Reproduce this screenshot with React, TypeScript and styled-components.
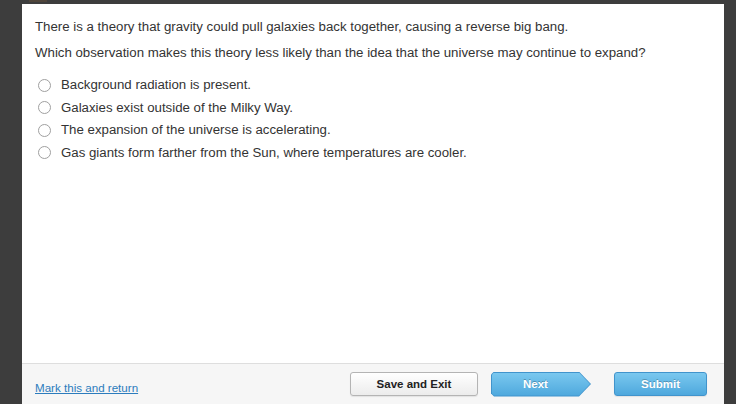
import React from "react";
import styled, { createGlobalStyle } from "styled-components";

const GlobalStyle = createGlobalStyle`
  html, body {
    margin: 0;
    padding: 0;
    background: #3d3d3d;
    font-family: "Liberation Sans", Arial, sans-serif;
  }
`;

const Frame = styled.div`
  width: 736px;
  height: 404px;
  overflow: hidden;
  display: flex;
  flex-direction: column;
  padding: 0 12px 0 22px;
  box-sizing: border-box;
`;

const TopStrip = styled.div`
  height: 4px;
  flex-shrink: 0;
  display: flex;
`;

const Tab = styled.span`
  width: 18px;
  height: 2px;
  margin-left: 7px;
  background: #57483a;
  opacity: 0.7;
`;

const Panel = styled.div`
  flex: 1;
  background: #fff;
  display: flex;
  flex-direction: column;
`;

const Content = styled.main`
  flex: 1;
  padding: 14px 13px 0;
  color: #333;
  font-size: 13.25px;
`;

const Prompt = styled.p`
  margin: 0 0 8px;
  line-height: 18px;
`;

const Options = styled.ul`
  list-style: none;
  margin: 12px 0 0;
  padding: 0 0 0 3px;
`;

const Option = styled.li`
  display: flex;
  align-items: center;
  gap: 10px;
  line-height: 22.5px;
`;

const Radio = styled.span`
  width: 11px;
  height: 11px;
  border-radius: 50%;
  border: 1.5px solid #a0a0a0;
  background: #fff;
  flex-shrink: 0;
`;

const Footer = styled.footer`
  height: 40px;
  border-top: 1px solid #dedede;
  background: #f6f6f6;
  display: flex;
  align-items: center;
  padding: 0 17px 0 13px;
`;

const MarkLink = styled.a`
  color: #2c7cbd;
  font-size: 11.6px;
  text-decoration: underline;
  padding-top: 6px;
  cursor: pointer;
`;

const Actions = styled.div`
  margin-left: auto;
  display: flex;
  align-items: center;
`;

const Button = styled.button<{ $primary?: boolean; $width: number }>`
  width: ${(p) => p.$width}px;
  height: 24px;
  border-radius: 3px;
  font-family: "Liberation Sans", Arial, sans-serif;
  font-size: 11.5px;
  font-weight: bold;
  cursor: pointer;
  padding: 0;
  border: 1px solid ${(p) => (p.$primary ? "#4194cc" : "#b4b4b4")};
  color: ${(p) => (p.$primary ? "#fff" : "#222")};
  background: ${(p) =>
    p.$primary
      ? "linear-gradient(#7ac8ef, #4ea8dd)"
      : "linear-gradient(#ffffff, #ececec)"};
  text-shadow: ${(p) => (p.$primary ? "0 -1px 0 rgba(0,0,0,0.25)" : "none")};
  box-shadow: 0 1px 1px rgba(0, 0, 0, 0.08);
`;

// arrow-shaped button: outer layer is the border, inner layer the fill
const ArrowOuter = styled.div`
  width: 100px;
  height: 25px;
  margin: 0 23px 0 13px;
  background: #4194cc;
  clip-path: polygon(3px 0, 88px 0, 100px 50%, 88px 100%, 3px 100%, 0 calc(100% - 3px), 0 3px);
  display: flex;
  cursor: pointer;
`;

const ArrowInner = styled.div`
  flex: 1;
  margin: 1px;
  background: linear-gradient(#7ac8ef, #4ea8dd);
  clip-path: polygon(2px 0, 87px 0, 98px 50%, 87px 100%, 2px 100%, 0 calc(100% - 2px), 0 2px);
  display: flex;
  align-items: center;
  padding-left: 31px;
  color: #fff;
  font-size: 11.5px;
  font-weight: bold;
  text-shadow: 0 -1px 0 rgba(0, 0, 0, 0.25);
`;

const choices = [
  "Background radiation is present.",
  "Galaxies exist outside of the Milky Way.",
  "The expansion of the universe is accelerating.",
  "Gas giants form farther from the Sun, where temperatures are cooler.",
];

export default function App() {
  return (
    <>
      <GlobalStyle />
      <Frame>
        <TopStrip>
          <Tab />
        </TopStrip>
        <Panel>
          <Content>
            <Prompt>
              There is a theory that gravity could pull galaxies back together, causing a reverse big bang.
            </Prompt>
            <Prompt>
              Which observation makes this theory less likely than the idea that the universe may continue to expand?
            </Prompt>
            <Options>
              {choices.map((c) => (
                <Option key={c}>
                  <Radio />
                  {c}
                </Option>
              ))}
            </Options>
          </Content>
          <Footer>
            <MarkLink>Mark this and return</MarkLink>
            <Actions>
              <Button $width={128}>Save and Exit</Button>
              <ArrowOuter>
                <ArrowInner>Next</ArrowInner>
              </ArrowOuter>
              <Button $primary $width={93}>
                Submit
              </Button>
            </Actions>
          </Footer>
        </Panel>
      </Frame>
    </>
  );
}
